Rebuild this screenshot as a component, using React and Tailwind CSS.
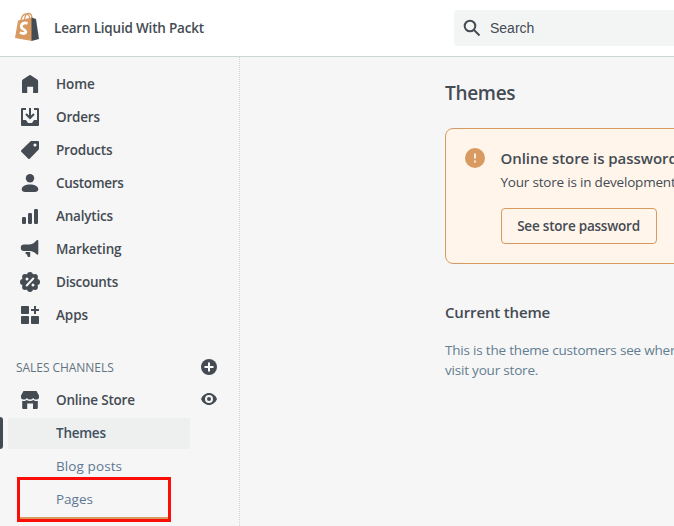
import React from 'react';

const ICONS = {
  home: <path d="M9.300 1.300a1.200 1.200 0 0 1 1.400 0l6.500 4.300c.6.400.9.900.9 1.500V18c0 .6-.4 1-1 1h-4v-6.200H7.200V19H3c-.6 0-1-.4-1-1V7.100c0-.6.3-1.100.8-1.500z" />,
  orders: (
    <>
      <path d="M1 2a1 1 0 0 1 1-1h4v2H3v10h3l2 3h4l2-3h3V3h-3V1h4a1 1 0 0 1 1 1v16a1 1 0 0 1-1 1H2a1 1 0 0 1-1-1z" />
      <path d="M9 1h2v7.500l2.300-2.200 1.400 1.400L10 12.400 5.300 7.700l1.400-1.400L9 8.500z" />
    </>
  ),
  products: <path fillRule="evenodd" d="M11.300 1H18a1 1 0 0 1 1 1v6.700a1 1 0 0 1-.3.7l-9 9.300a1 1 0 0 1-1.400 0l-7-7a1 1 0 0 1 0-1.400l9.300-9a1 1 0 0 1 .7-.3zM15 3.400a1.600 1.600 0 1 0 0 3.200 1.600 1.600 0 0 0 0-3.200z" />,
  customers: (
    <>
      <circle cx="10" cy="5.200" r="4.200" />
      <path d="M10 11.500c4.600 0 8.300 2 8.300 4.800 0 1.700-1.500 2.700-3.300 2.700H5c-1.800 0-3.300-1-3.300-2.700 0-2.800 3.700-4.800 8.300-4.800z" />
    </>
  ),
  analytics: (
    <>
      <rect x="2" y="11" width="4" height="7" rx="1.200" />
      <rect x="8" y="7" width="4" height="11" rx="1.200" />
      <rect x="14" y="3" width="4" height="15" rx="1.200" />
    </>
  ),
  marketing: (
    <>
      <path d="M16.700 1.300a.9.9 0 0 1 1.600.6v12.800a.9.9 0 0 1-1.500.7c-2-2-4.300-3.200-7.300-3.400H4a3.200 3.200 0 0 1 0-6.400h5.500c3.200-.2 5.300-2.100 7.200-4.300z" />
      <path d="M5.500 13h4.700v4.200a.8.8 0 0 1-.8.8H8.600c-.4 0-.7-.2-.9-.6L7 15.500c-1 0-1.500-.9-1.500-1.700z" />
    </>
  ),
  discounts: (
    <>
      <circle cx="10" cy="10" r="8.200" />
      <circle cx="10" cy="2.900" r="2.900" />
      <circle cx="15" cy="5" r="2.900" />
      <circle cx="17.100" cy="10" r="2.900" />
      <circle cx="15" cy="15" r="2.900" />
      <circle cx="10" cy="17.100" r="2.900" />
      <circle cx="5" cy="15" r="2.900" />
      <circle cx="2.900" cy="10" r="2.900" />
      <circle cx="5" cy="5" r="2.900" />
      <g className="fill-[#f6f6f6] stroke-[#f6f6f6]">
        <path d="M6.700 13.500l6.600-7" strokeWidth="2" strokeLinecap="round" />
        <circle cx="7" cy="7" r="1.500" stroke="none" />
        <circle cx="13" cy="13" r="1.500" stroke="none" />
      </g>
    </>
  ),
  apps: (
    <>
      <rect x="1" y="1" width="8" height="8" rx=".8" />
      <rect x="1" y="11" width="8" height="8" rx=".8" />
      <rect x="11" y="11" width="8" height="8" rx=".8" />
      <path d="M14 1h2v3h3v2h-3v3h-2V6h-3V4h3z" />
    </>
  ),
  store: (
    <>
      <path d="M3.500 1h13L19 5.500V7a2.500 2.500 0 0 1-2.500 2.500A3 3 0 0 1 13.200 8 4 4 0 0 1 6.800 8 3 3 0 0 1 3.500 9.500 2.500 2.500 0 0 1 1 7V5.500z" />
      <path d="M2.200 11c1.600.3 3 0 4.300-1.100 2.200 1.500 4.800 1.500 7 0 1.300 1.100 2.700 1.400 4.300 1.100v7a1 1 0 0 1-1 1H13v-5.500H7.200V19h-4a1 1 0 0 1-1-1z" />
    </>
  ),
};

function Icon({ name }) {
  return (
    <svg viewBox="0 0 20 20" className="mr-4 mb-px ml-5 size-5 shrink-0 fill-[#444b53]">
      {ICONS[name]}
    </svg>
  );
}

const NAV = [
  ['home', 'Home', 'tracking-[-0.1px]'],
  ['orders', 'Orders', 'tracking-[-0.2px]'],
  ['products', 'Products', 'tracking-[-0.2px]'],
  ['customers', 'Customers', 'tracking-[-0.3px]'],
  ['analytics', 'Analytics', 'tracking-[-0.2px]'],
  ['marketing', 'Marketing', 'tracking-[-0.15px]'],
  ['discounts', 'Discounts', 'tracking-[-0.25px]'],
  ['apps', 'Apps', 'tracking-[-0.1px]'],
];

function Logo() {
  return (
    <svg viewBox="0 0 26 30" className="mb-[3px] ml-[14px] h-[30px] w-[26px]">
      <path d="M7 9C7 5 9.500 2 12 2s4 3 4 6M10.500 8c0-4 2-6.500 4-6.500 2 0 3.500 2 3.500 5" fill="none" stroke="#d99a62" strokeWidth="1.300" />
      <path d="M4 8.500l14-3V29L1 26z" fill="#d99a62" />
      <path d="M17.500 5.500l4.500 1.500L25 27l-7.500 2z" fill="#444b53" />
      <path d="M13.500 11.500c-3-1.500-6.300.2-6.300 2.900 0 3 4.500 2.900 4.500 5.300 0 2.200-3 2.300-5.800.7" fill="none" stroke="#fff" strokeWidth="2.800" />
    </svg>
  );
}

export default function App() {
  return (
    <div className="flex h-[526px] w-[674px] flex-col overflow-hidden bg-[#f6f6f6] font-['Open_Sans','Noto_Sans',sans-serif] text-[#444b53]">
      <header className="flex h-[57px] shrink-0 items-center border-b border-[#cdd5d5] bg-white">
        <div className="flex w-[454px] shrink-0 items-center">
          <Logo />
          <span className="ml-[14px] text-[13.5px] font-semibold tracking-[-0.2px] whitespace-nowrap">Learn Liquid With Packt</span>
        </div>
        <div className="flex h-9 flex-1 items-center rounded-l bg-[#f3f5f5] pl-[9px]">
          <svg viewBox="0 0 18 18" className="size-[18px] fill-none stroke-[#444b53] stroke-2">
            <circle cx="7" cy="7" r="5.300" />
            <path d="M11 11l5.500 5.500" />
          </svg>
          <span className="mt-px ml-[9px] font-['Liberation_Sans',sans-serif] text-[14px]">Search</span>
        </div>
      </header>
      <div className="flex min-h-0 flex-1">
        <aside className="flex w-60 shrink-0 flex-col border-r border-dotted border-[#cdd5d5] pt-[11px] text-[13.5px] font-[580]">
          {NAV.map(([icon, label, spacing]) => (
            <div key={label} className="flex h-[33px] shrink-0 items-center">
              <Icon name={icon} />
              <span className={spacing}>{label}</span>
            </div>
          ))}
          <div className="mt-[19px] flex h-[33px] shrink-0 items-center justify-between pr-[22px] pl-4">
            <span className="text-[12px] font-normal tracking-[-0.05px] text-[#637381]">SALES CHANNELS</span>
            <svg viewBox="0 0 16 16" className="mb-0.5 size-4">
              <circle cx="8" cy="8" r="8" fill="#444b53" />
              <path d="M8 3.500v9M3.500 8h9" stroke="#fff" strokeWidth="2" />
            </svg>
          </div>
          <div className="flex h-[33px] shrink-0 items-center pr-[22px]">
            <Icon name="store" />
            <span className="flex-1 tracking-[-0.2px]">Online Store</span>
            <svg viewBox="0 0 16 12" className="mb-[3px] h-3 w-4">
              <path d="M0 6c1.500-3.500 4.500-6 8-6s6.500 2.500 8 6c-1.500 3.500-4.500 6-8 6S1.500 9.500 0 6z" fill="#444b53" />
              <circle cx="8" cy="6" r="3" fill="none" stroke="#f6f6f6" strokeWidth="2" />
            </svg>
          </div>
          <div className="flex h-[33px] shrink-0 items-center">
            <div className="mb-px h-8 w-[3px] rounded-r bg-[#444b53]" />
            <div className="ml-[5px] flex h-[31px] w-[182px] items-center bg-[#edf0ef] pl-12 tracking-[-0.25px] text-[#42505f]">Themes</div>
          </div>
          <div className="flex h-[33px] shrink-0 items-center pl-14 font-medium tracking-[0.1px] text-[#5d7892]">Blog posts</div>
          <div className="-mt-[6px] ml-[17px] flex h-[45px] w-[154px] shrink-0 items-stretch border-[3px] border-[#fb0d08]">
            <div className="flex flex-1 items-center border-b-2 border-[#d99a62] pt-0.5 pl-9 font-medium text-[#5d7892]">Pages</div>
          </div>
        </aside>
        <main className="flex w-[434px] shrink-0 flex-col pl-[205px]">
          <h1 className="mt-[22px] text-[19px] leading-7 font-[580] tracking-[-0.3px]">Themes</h1>
          <section className="mt-[21px] flex h-[136px] w-[300px] shrink-0 rounded-lg border border-[#d99a62] bg-[#fff5eb] pl-[19px]">
            <svg viewBox="0 0 20 20" className="mt-[19px] size-5 shrink-0">
              <circle cx="10" cy="10" r="10" fill="#d99a62" />
              <path d="M10 5.500v5M10 12.500v2" stroke="#fff5eb" strokeWidth="1.800" />
            </svg>
            <div className="ml-[15.5px] pt-[19px] whitespace-nowrap">
              <h2 className="text-[15px] leading-5 font-semibold tracking-[-0.05px]">Online store is password</h2>
              <p className="mt-1 text-[13.5px] leading-5 tracking-[-0.2px]">Your store is in development</p>
              <button className="mt-4 h-9 w-[156px] rounded border border-[#d99a62] text-[13.5px] font-[580] tracking-[-0.22px]">See store password</button>
            </div>
          </section>
          <h2 className="mt-[37px] text-[15px] leading-[22px] font-semibold tracking-[-0.15px]">Current theme</h2>
          <p className="mt-[17px] text-[13.5px] leading-5 tracking-[-0.2px] whitespace-nowrap text-[#637d91]">
            This is the theme customers see wher
            <br />
            visit your store.
          </p>
        </main>
      </div>
    </div>
  );
}
